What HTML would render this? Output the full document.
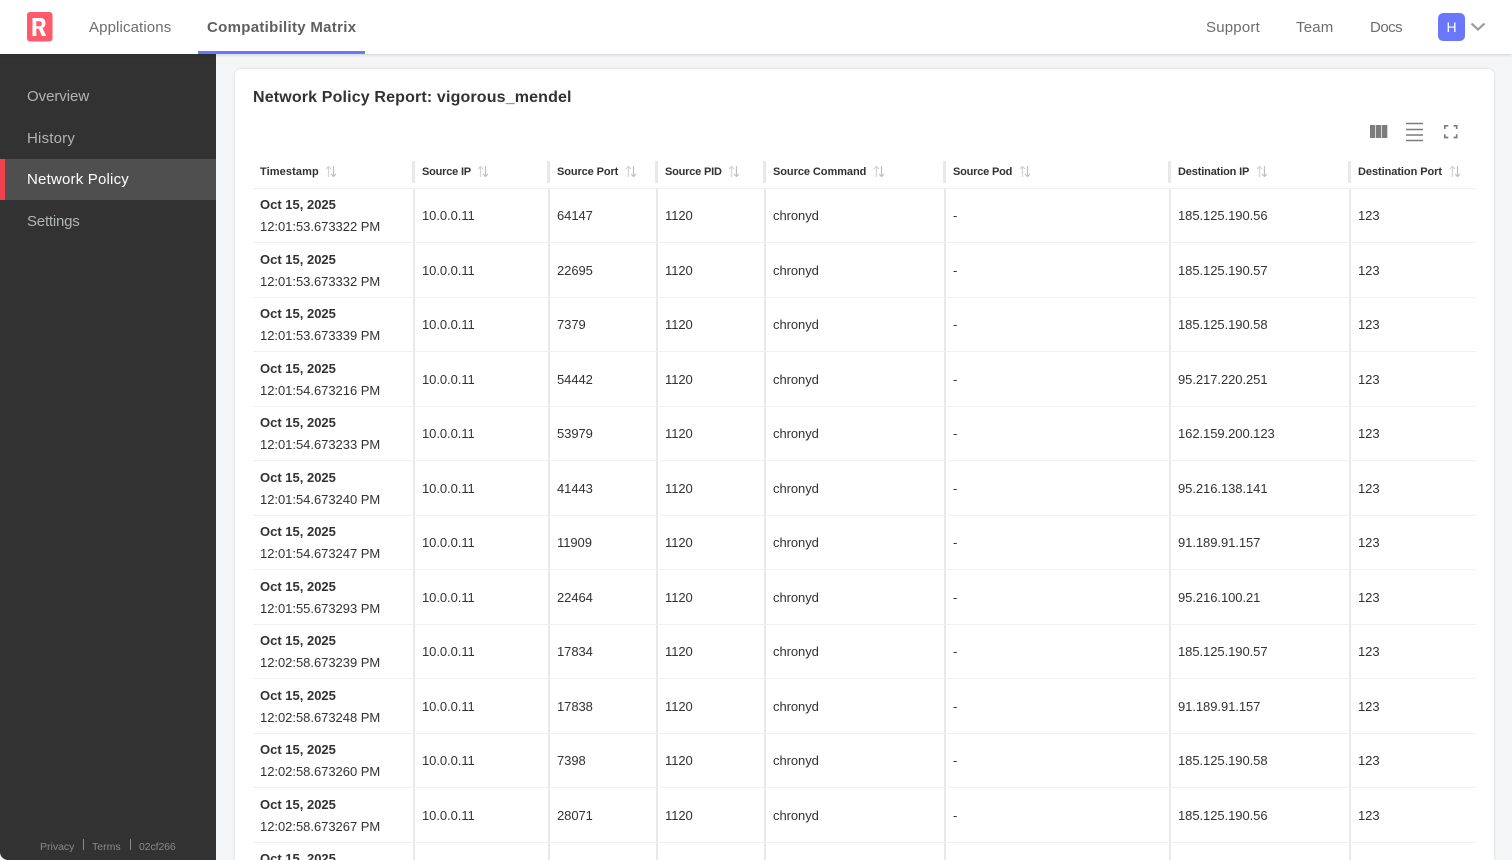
<!DOCTYPE html>
<html><head><meta charset="utf-8"><title>Network Policy</title>
<style>
*{box-sizing:border-box}
html,body{margin:0;padding:0;width:1512px;height:860px;overflow:hidden;background:#f4f5f7;font-family:"Liberation Sans",sans-serif}
#root{position:absolute;left:0;top:0;width:1512px;height:860px;overflow:hidden;background:#f4f5f7}
.a{position:absolute;white-space:nowrap}
#top{position:absolute;left:0;top:0;width:1512px;height:54px;background:#fff;box-shadow:0 1px 3px rgba(0,0,0,.15);z-index:3}
.nav{font-size:15px;color:#6d6d6d;top:19px;line-height:18px;letter-spacing:.2px}
#side{position:absolute;left:0;top:54px;width:216px;height:806px;background:#323232;border-bottom-left-radius:8px;z-index:2}
.si{font-size:15px;color:#b0b5b3;left:27px;line-height:18px;letter-spacing:.2px}
.ft{font-size:10.5px;color:#8a8a8a;top:786px;line-height:14px}
.fs{position:absolute;width:1px;height:11px;background:#8a8a8a;top:785px}
#card{position:absolute;left:235px;top:69px;width:1259px;height:800px;background:#fff;border-radius:6px;box-shadow:0 0 3px rgba(0,0,0,.12)}
table{position:absolute;left:253px;top:155px;width:1223px;border-collapse:separate;border-spacing:0;table-layout:fixed;font-size:13px;color:#323232}
th{height:34px;font-size:11px;font-weight:700;text-align:left;padding:0 0 0 7px;border-bottom:1px solid #f0f0f0;color:#323232;position:relative;white-space:nowrap}
th:not(:first-child)::before{content:"";position:absolute;left:-1px;top:6px;width:3px;height:22px;background:#e8e8e8;border-radius:1px}
th svg{vertical-align:-3px;margin-left:6.500px}
tbody tr:nth-child(odd) td{height:54px}
tbody tr:nth-child(even) td{height:55px;padding-top:2px}
td{padding:0 0 0 8px;border-bottom:1px solid #f0f0f0;white-space:nowrap;line-height:22px;letter-spacing:-.06px}
td:not(:first-child){border-left:2px solid #e8e8e8;padding-left:7px}
td:first-child{padding-left:7px;letter-spacing:-.03px}
b{font-weight:700;display:block;color:#323232;letter-spacing:0}
</style></head><body>
<div id="root">
<div id="top">
<svg class="a" style="left:27px;top:12px" width="26" height="30" viewBox="0 0 26 30"><rect width="25.500" height="29.500" rx="3" fill="#fd5b6c"/><path fill-rule="evenodd" d="M5.500 6h7.500c3.500 0 5.500 2 5.500 5.200 0 2.300-1.100 4-3 4.800l3.700 8h-4.200l-3.200-7.400h-2.500V24H5.500zM9.300 9.300v5h3.200c1.500 0 2.300-.9 2.300-2.500s-.8-2.500-2.300-2.500z" fill="#fff"/></svg>
<div class="a nav" style="left:89px;letter-spacing:.12px">Applications</div>
<div class="a nav" style="left:207px;font-weight:700;color:#5f5f5f;letter-spacing:.3px">Compatibility Matrix</div>
<div class="a" style="left:198px;top:51px;width:167px;height:3px;background:#6a77fb"></div>
<div class="a nav" style="left:1206px">Support</div>
<div class="a nav" style="left:1296px">Team</div>
<div class="a nav" style="left:1370px;letter-spacing:-.5px">Docs</div>
<div class="a" style="left:1438px;top:13px;width:27px;height:28px;border-radius:5px;background:#6a77fb;color:#fff;font-size:14px;line-height:28px;text-align:center">H</div>
<svg class="a" style="left:1470px;top:22px" width="16" height="10" viewBox="0 0 16 10"><path d="M1.500 1.500L8 7.500l6.500-6" fill="none" stroke="#9a9a9a" stroke-width="2.200"/></svg>
</div>
<div id="side">
<div class="a si" style="top:34px;letter-spacing:-.05px">Overview</div>
<div class="a si" style="top:76px">History</div>
<div class="a" style="left:0;top:105px;width:216px;height:41px;background:#4f4f4f;border-left:5px solid #f0414f"></div>
<div class="a si" style="top:117px;color:#fff">Network Policy</div>
<div class="a si" style="top:159px;letter-spacing:-.2px">Settings</div>
<div class="a ft" style="left:40px">Privacy</div><div class="fs" style="left:83px"></div>
<div class="a ft" style="left:92px">Terms</div><div class="fs" style="left:130px"></div>
<div class="a ft" style="left:139px;letter-spacing:-.1px">02cf266</div>
</div>
<div id="card"></div>
<div class="a" style="left:253px;top:88px;font-size:16px;font-weight:700;color:#323232;line-height:20px;letter-spacing:.15px">Network Policy Report: vigorous_mendel</div>
<svg class="a" style="left:1370px;top:122px" width="90" height="20" viewBox="0 0 90 20">
<path d="M0 3h5.300v13H0zM6 3h5.300v13H6zM12 3h5.300v13H12z" fill="#7c7c7c"/>
<path d="M36 1.500h17M36 7.500h17M36 13h17M36 18.500h17" stroke="#7c7c7c" stroke-width="1.600" fill="none"/>
<path d="M74.800 7V3.800h3.500M83.500 3.800h3.200V7M86.700 12.300v3.200h-3.200M78.300 15.500h-3.500v-3.200" stroke="#7c7c7c" stroke-width="1.700" fill="none"/>
</svg>
<svg width="0" height="0" style="position:absolute"><defs><g id="s"><path d="M3.500 12V1.500M1 4l2.500-2.500L6 4" fill="none" stroke="#d4d4d4" stroke-width="1.200"/><path d="M8.500 1v10.500M6 9l2.500 2.500L11 9" fill="none" stroke="#c0c0c0" stroke-width="1.200"/></g></defs></svg>
<table>
<colgroup><col style="width:160px"><col style="width:135px"><col style="width:108px"><col style="width:108px"><col style="width:180px"><col style="width:225px"><col style="width:180px"><col style="width:127px"></colgroup>
<thead><tr>
<th style="letter-spacing:.1px">Timestamp<svg width="12" height="13"><use href="#s"/></svg></th>
<th style="padding-left:9px;letter-spacing:-.2px">Source IP<svg width="12" height="13"><use href="#s"/></svg></th>
<th style="padding-left:9px;letter-spacing:-.1px">Source Port<svg width="12" height="13"><use href="#s"/></svg></th>
<th style="padding-left:9px;letter-spacing:-.2px">Source PID<svg width="12" height="13"><use href="#s"/></svg></th>
<th style="padding-left:9px;letter-spacing:-.06px">Source Command<svg width="12" height="13"><use href="#s"/></svg></th>
<th style="padding-left:9px;letter-spacing:-.2px">Source Pod<svg width="12" height="13"><use href="#s"/></svg></th>
<th style="padding-left:9px;letter-spacing:-.15px">Destination IP<svg width="12" height="13"><use href="#s"/></svg></th>
<th style="padding-left:9px;letter-spacing:-.06px">Destination Port<svg width="12" height="13"><use href="#s"/></svg></th>
</tr></thead>
<tbody>
<tr><td><b>Oct 15, 2025</b>12:01:53.673322 PM</td><td>10.0.0.11</td><td>64147</td><td>1120</td><td>chronyd</td><td>-</td><td>185.125.190.56</td><td>123</td></tr>
<tr><td><b>Oct 15, 2025</b>12:01:53.673332 PM</td><td>10.0.0.11</td><td>22695</td><td>1120</td><td>chronyd</td><td>-</td><td>185.125.190.57</td><td>123</td></tr>
<tr><td><b>Oct 15, 2025</b>12:01:53.673339 PM</td><td>10.0.0.11</td><td>7379</td><td>1120</td><td>chronyd</td><td>-</td><td>185.125.190.58</td><td>123</td></tr>
<tr><td><b>Oct 15, 2025</b>12:01:54.673216 PM</td><td>10.0.0.11</td><td>54442</td><td>1120</td><td>chronyd</td><td>-</td><td>95.217.220.251</td><td>123</td></tr>
<tr><td><b>Oct 15, 2025</b>12:01:54.673233 PM</td><td>10.0.0.11</td><td>53979</td><td>1120</td><td>chronyd</td><td>-</td><td>162.159.200.123</td><td>123</td></tr>
<tr><td><b>Oct 15, 2025</b>12:01:54.673240 PM</td><td>10.0.0.11</td><td>41443</td><td>1120</td><td>chronyd</td><td>-</td><td>95.216.138.141</td><td>123</td></tr>
<tr><td><b>Oct 15, 2025</b>12:01:54.673247 PM</td><td>10.0.0.11</td><td>11909</td><td>1120</td><td>chronyd</td><td>-</td><td>91.189.91.157</td><td>123</td></tr>
<tr><td><b>Oct 15, 2025</b>12:01:55.673293 PM</td><td>10.0.0.11</td><td>22464</td><td>1120</td><td>chronyd</td><td>-</td><td>95.216.100.21</td><td>123</td></tr>
<tr><td><b>Oct 15, 2025</b>12:02:58.673239 PM</td><td>10.0.0.11</td><td>17834</td><td>1120</td><td>chronyd</td><td>-</td><td>185.125.190.57</td><td>123</td></tr>
<tr><td><b>Oct 15, 2025</b>12:02:58.673248 PM</td><td>10.0.0.11</td><td>17838</td><td>1120</td><td>chronyd</td><td>-</td><td>91.189.91.157</td><td>123</td></tr>
<tr><td><b>Oct 15, 2025</b>12:02:58.673260 PM</td><td>10.0.0.11</td><td>7398</td><td>1120</td><td>chronyd</td><td>-</td><td>185.125.190.58</td><td>123</td></tr>
<tr><td><b>Oct 15, 2025</b>12:02:58.673267 PM</td><td>10.0.0.11</td><td>28071</td><td>1120</td><td>chronyd</td><td>-</td><td>185.125.190.56</td><td>123</td></tr>
<tr><td><b>Oct 15, 2025</b>12:02:58.673270 PM</td><td>10.0.0.11</td><td>11111</td><td>1120</td><td>chronyd</td><td>-</td><td>185.125.190.57</td><td>123</td></tr>
</tbody></table>
</div>
</body></html>
